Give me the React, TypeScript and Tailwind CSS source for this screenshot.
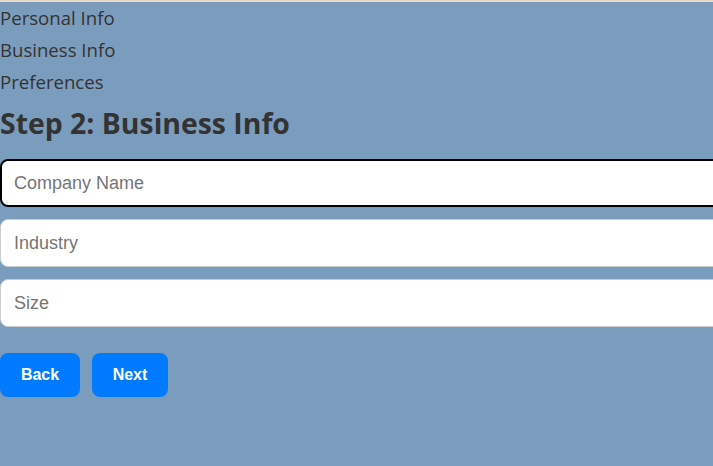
import React from "react";

export default function App() {
  return (
    <div className="min-h-[466px] w-[713px] overflow-hidden bg-[#7b9dbd]">
      <div className="h-[2px] bg-[#e8dcc8]" />
      <div className="font-['Open_Sans',sans-serif] text-[#333333]">
        <div className="text-[18.6px] leading-[32px]">Personal Info</div>
        <div className="text-[18.6px] leading-[32px]">Business Info</div>
        <div className="text-[18.6px] leading-[32px]">Preferences</div>
        <h2 className="mt-[5px] text-[28.4px] font-bold leading-[40px]">Step 2: Business Info</h2>
      </div>
      <div className="mt-[16px] flex w-[740px] flex-col gap-[12px] font-['Liberation_Sans',Arial,sans-serif]">
        <input
          placeholder="Company Name"
          className="h-[48px] rounded-[8px] border-2 border-black bg-white px-[12px] text-[18px] text-[#333] outline-none placeholder:text-[#757575]"
        />
        <input
          placeholder="Industry"
          className="h-[48px] rounded-[8px] border border-[#cccccc] bg-white px-[13px] text-[18px] text-[#333] outline-none placeholder:text-[#757575]"
        />
        <input
          placeholder="Size"
          className="h-[48px] rounded-[8px] border border-[#cccccc] bg-white px-[13px] text-[18px] text-[#333] outline-none placeholder:text-[#757575]"
        />
      </div>
      <div className="mt-[26px] flex gap-[12px] font-['Liberation_Sans',Arial,sans-serif]">
        <button className="h-[44px] w-[80px] rounded-[8px] bg-[#007bff] text-[16px] font-bold text-white">Back</button>
        <button className="h-[44px] w-[76px] rounded-[8px] bg-[#007bff] text-[16px] font-bold text-white">Next</button>
      </div>
    </div>
  );
}
